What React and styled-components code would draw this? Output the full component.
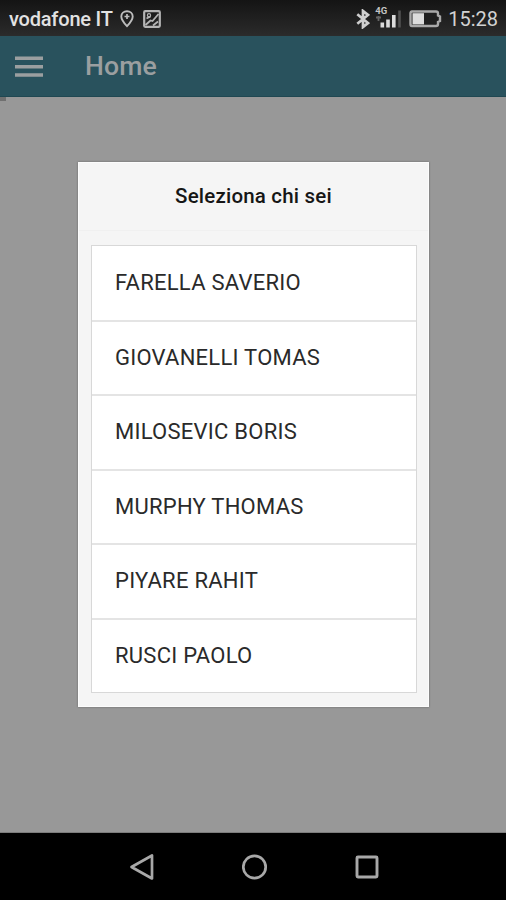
import React from 'react'
import styled, { createGlobalStyle } from 'styled-components'

const people = [
    'FARELLA SAVERIO',
    'GIOVANELLI TOMAS',
    'MILOSEVIC BORIS',
    'MURPHY THOMAS',
    'PIYARE RAHIT',
    'RUSCI PAOLO',
]

function StatusBar() {
    return (
        <StatusBarStyled>
            <Carrier>vodafone IT</Carrier>
            <StatusIcon width="14" height="18" viewBox="0 0 14 18" $left={7}>
                <path d="M7 1.2C3.8 1.2 1.3 3.4 1.3 6.4C1.3 10 7 16.2 7 16.2S12.7 10 12.7 6.4C12.7 3.4 10.2 1.2 7 1.2Z" fill="none" stroke="#bdbdbd" strokeWidth="1.9" />
                <path d="M7 4v5M4.5 6.5h5" stroke="#bdbdbd" strokeWidth="1.7" />
            </StatusIcon>
            <StatusIcon width="18" height="18" viewBox="0 0 18 18" $left={9}>
                <rect x="1.2" y="1.2" width="15.6" height="15.6" rx="1" fill="none" stroke="#b4b4b4" strokeWidth="2.2" />
                <path d="M2.5 15L7.5 10.5L9.5 11L15.5 4M10 15.5L15 11.5M3.5 8.5L7.5 6.5" fill="none" stroke="#b4b4b4" strokeWidth="1.8" />
                <circle cx="6" cy="5.2" r="1.6" fill="none" stroke="#b4b4b4" strokeWidth="1.2" />
            </StatusIcon>
            <Spacer />
            <StatusIcon width="14" height="20" viewBox="0 0 14 20">
                <path d="M1.3 5.3L12 14L7 18V2L12 6L1.3 14.7" fill="none" stroke="#cfcfcf" strokeWidth="2.7" />
            </StatusIcon>
            <Signal>
                <Network>4G</Network>
                <svg width="28" height="22" viewBox="0 0 28 22">
                    <path d="M2 9.5h5M4.5 8v5" stroke="#666" strokeWidth="1.8" />
                    <rect x="6.5" y="14.5" width="3.6" height="5" fill="#dcdcdc" />
                    <rect x="12.2" y="11.5" width="3.6" height="8" fill="#dcdcdc" />
                    <rect x="18" y="7" width="3.6" height="12.5" fill="#dcdcdc" />
                    <rect x="24.2" y="2.5" width="2.6" height="17" fill="#505050" />
                </svg>
            </Signal>
            <StatusIcon width="33" height="18" viewBox="0 0 33 18" $left={7}>
                <path d="M3 1.5H27Q29 1.5 29 3.5V5.5L31 6.5V11L29 12V14Q29 16 27 16H3Q1.5 16 1.5 14V3.5Q1.5 1.5 3 1.5Z" fill="#202020" stroke="#a9a9a9" strokeWidth="2.4" />
                <rect x="3.5" y="3.2" width="11.5" height="11.2" fill="#dcdcdc" />
            </StatusIcon>
            <Clock>15:28</Clock>
        </StatusBarStyled>
    )
}

function NavBar() {
    return (
        <NavBarStyled>
            <svg width="26" height="28" viewBox="0 0 26 28">
                <path d="M23 2.5V25.5L2.5 14Z" fill="none" stroke="#a8a8a8" strokeWidth="2.7" strokeLinejoin="round" />
            </svg>
            <svg width="26" height="26" viewBox="0 0 26 26">
                <circle cx="12.5" cy="13" r="11.2" fill="none" stroke="#a8a8a8" strokeWidth="2.7" />
            </svg>
            <svg width="26" height="26" viewBox="0 0 26 26">
                <rect x="3" y="3" width="20" height="20" rx="1" fill="none" stroke="#a8a8a8" strokeWidth="2.9" />
            </svg>
        </NavBarStyled>
    )
}

function App() {
    return (
        <Screen>
            <GlobalStyle />
            <StatusBar />
            <Toolbar>
                <MenuButton aria-label="Menu">
                    <svg width="28" height="22" viewBox="0 0 28 22">
                        <path d="M0 2.3H28M0 10.7H28M0 19H28" stroke="#9b9fa0" strokeWidth="3.5" />
                    </svg>
                </MenuButton>
                <Title>Home</Title>
            </Toolbar>
            <Content>
                <Progress />
                <Popup>
                    <PopupHead>Seleziona chi sei</PopupHead>
                    <PopupBody>
                        <List>
                            {people.map(name => (
                                <Item key={name}>{name}</Item>
                            ))}
                        </List>
                    </PopupBody>
                </Popup>
            </Content>
            <NavBar />
        </Screen>
    )
}

const GlobalStyle = createGlobalStyle`
    * {
        box-sizing: border-box;
    }
    body {
        margin: 0;
        background: #000;
        font-family: Roboto, "Liberation Sans", sans-serif;
    }
    svg {
        display: block;
        flex-shrink: 0;
    }
`;

const Screen = styled.div`
    display: flex;
    flex-direction: column;
    width: 506px;
    height: 900px;
    overflow: hidden;
`;

const StatusBarStyled = styled.div`
    display: flex;
    align-items: center;
    height: 36px;
    padding: 1px 8px 0 9px;
    background: linear-gradient(#141414, #2b2b2b);
    color: #e2e2e2;
`;

const Carrier = styled.span`
    font-size: 20px;
    font-weight: 500;
    white-space: nowrap;
    letter-spacing: -0.2px;
`;

const StatusIcon = styled.svg`
    margin-left: ${props => props.$left || 0}px;
`;

const Spacer = styled.div`
    flex: 1;
`;

const Signal = styled.div`
    position: relative;
    margin-left: 4px;
`;

const Network = styled.span`
    position: absolute;
    top: -2px;
    left: 1px;
    font-size: 9.5px;
    font-weight: 700;
    line-height: 10px;
    color: #c4c4c4;
`;

const Clock = styled.span`
    margin-left: 6px;
    font-size: 20px;
    color: #d2d2d2;
`;

const Toolbar = styled.header`
    display: flex;
    align-items: center;
    height: 61px;
    padding-left: 15px;
    background: #29525d;
    border-bottom: 1px solid #204852;
`;

const MenuButton = styled.button`
    width: 28px;
    padding: 1px 0 0;
    border: 0;
    background: none;
`;

const Title = styled.h1`
    margin: 0 0 2px 42px;
    font-size: 26.6px;
    font-weight: 500;
    letter-spacing: 0.1px;
    color: #9b9fa0;
`;

const Content = styled.main`
    display: flex;
    flex-direction: column;
    align-items: center;
    height: 736px;
    background: #989898;
    border-bottom: 1px solid #7c7c7c;
`;

const Progress = styled.div`
    align-self: flex-start;
    width: 6px;
    height: 4px;
    margin-bottom: 61px;
    background: #707070;
`;

const Popup = styled.section`
    width: 351px;
    height: 545px;
    margin-left: 1px;
    background: #f5f5f5;
    border: 1px solid #fcfcfc;
    box-shadow: 0 0 2px rgba(0, 0, 0, 0.35);
`;

const PopupHead = styled.h2`
    height: 68px;
    margin: 0;
    border-bottom: 1px solid #f0f0f0;
    font-size: 20.5px;
    font-weight: 500;
    line-height: 66px;
    letter-spacing: 0.2px;
    text-align: center;
    color: #161616;
`;

const PopupBody = styled.div`
    padding: 14px 11px 14px 12px;
`;

const List = styled.ul`
    display: grid;
    grid-template-rows: 73.5px repeat(5, 1fr);
    height: 448px;
    margin: 0;
    padding: 0;
    border: 1px solid #d8d8d8;
    background: #fff;
    list-style: none;
`;

const Item = styled.li`
    display: flex;
    align-items: center;
    padding-left: 23px;
    font-size: 22px;
    letter-spacing: 0.25px;
    color: #2a2a2a;

    & + & {
        padding-bottom: 1px;
        border-top: 2px solid #e4e4e4;
    }
`;

const NavBarStyled = styled.nav`
    display: flex;
    align-items: center;
    gap: 86.5px;
    height: 67px;
    padding-left: 129px;
    background: #000;
`;

export default App
